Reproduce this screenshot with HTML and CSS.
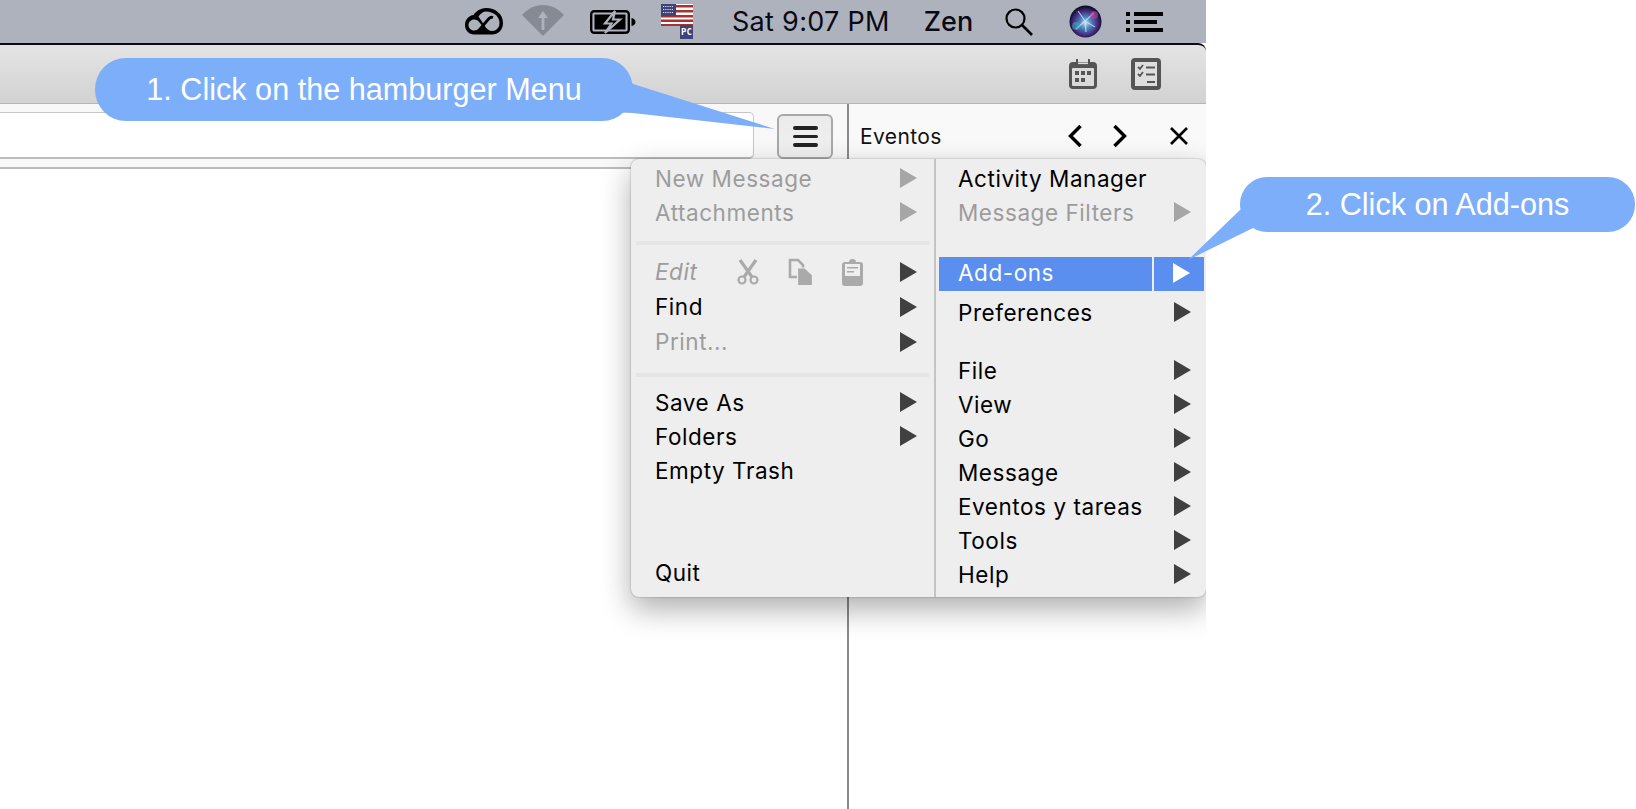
FILE: index.html
```html
<!DOCTYPE html>
<html lang="en">
<head>
<meta charset="utf-8">
<title>Add-ons</title>
<link rel="stylesheet" href="styles.css">
</head>
<body>

<div class="window">

  <div class="menubar">
    <svg class="ic-cc" width="38" height="27" viewBox="0 0 38 27"><path d="M9 26.500C4 26.500 0 22.500 0 17 0 11.500 4 7.500 8.500 7 11 3 16 0 21 0c9.500 0 17 6 17 15 0 7-5 11.500-11 11.500z" fill="#000"/><path d="M9 11.500c-3 0-5.500 2.500-5.500 5.500s2.500 5.500 5.500 5.500c2.500 0 4-1.200 5.500-3l2-2.500-2-2.500c-1.500-2-3-3-5.500-3z" fill="#adb2bd"/><path d="M13.500 8.500C15.500 5.500 18 3.500 21 3.500c7.500 0 13.500 5 13.500 11.500 0 4.500-3.500 8-7.500 8-2.500 0-4.500-1.500-6-3.300z" fill="#adb2bd"/><path d="M18 17.500l6-7c1-1 2.500-1.500 4-1" fill="none" stroke="#000" stroke-width="2.800"/></svg>
    <svg class="ic-wifi" width="42" height="31" viewBox="0 0 42 31"><path d="M0 10C6 3.500 13 0 21 0s15 3.500 21 10L21 31z" fill="#858a93"/><path d="M21 6l5 7h-3.600v12h-2.800V13H16z" fill="#adb2bd"/></svg>
    <svg class="ic-battery" width="47" height="24" viewBox="0 0 47 24"><rect x="1.200" y="1.200" width="37.600" height="21.600" rx="3" fill="#adb2bd" stroke="#000" stroke-width="2.400"/><path d="M4.500 4.500h31v15h-31z" fill="#000"/><path d="M25 1L15 13.500h6.500L15 23l15-13.500h-7z" fill="#000" stroke="#adb2bd" stroke-width="2.200"/><path d="M41.500 8c2.500 .5 4 2 4 4s-1.500 3.500-4 4z" fill="#000"/></svg>
    <div class="flag">
      <svg width="32" height="22" viewBox="0 0 32 22"><rect width="32" height="22" fill="#fff"/><path d="M0 1h32v2.400H0zM0 6h32v2.400H0zM0 11h32v2.400H0zM0 15.500h32v2.400H0zM0 20h32v2H0z" fill="#a8322f"/><rect width="15" height="12" fill="#3f4379"/><path d="M2 2.500h11M2 5.500h11M2 8.500h11" stroke="#dfe0ea" stroke-width="1.200" stroke-dasharray="1.200 1"/></svg>
      <span class="flag-pc">PC</span>
    </div>
    <span class="clock">Sat 9:07 PM</span>
    <span class="user">Zen</span>
    <svg class="ic-search" width="30" height="30" viewBox="0 0 30 30"><circle cx="11.500" cy="11.500" r="9" fill="none" stroke="#000" stroke-width="2.200"/><path d="M18 18l10 10" stroke="#000" stroke-width="2.600"/></svg>
    <svg class="ic-siri" width="33" height="33" viewBox="0 0 33 33"><defs><radialGradient id="siri" cx="50%" cy="55%" r="55%"><stop offset="0" stop-color="#c8d8f0"/><stop offset=".3" stop-color="#4a8fc0"/><stop offset=".65" stop-color="#4a3288"/><stop offset="1" stop-color="#05051a"/></radialGradient></defs><circle cx="16.500" cy="16.500" r="16" fill="url(#siri)"/><path d="M16 16L9 6M16 16l9-8M16 16l-9 8M16 16l10 6M16 16l1 11" stroke="#dfe8f8" stroke-width="1.300" opacity=".7"/><circle cx="7" cy="21" r="4" fill="#37c0c0" opacity=".5"/><circle cx="25" cy="10" r="4" fill="#c04a9e" opacity=".55"/></svg>
    <svg class="ic-list" width="37" height="20" viewBox="0 0 37 20"><path d="M0 0h4v4H0zM8 0h29v4H8zM0 8h4v4H0zM8 8h23v4H8zM0 16h4v4H0zM8 16h29v4H8z" fill="#000"/></svg>
  </div>

  <div class="toolbar">
    <svg width="28" height="30" viewBox="0 0 28 30"><path d="M4 3h3V0h2v3h10V0h2v3h3a4 4 0 0 1 4 4v19a4 4 0 0 1-4 4H4a4 4 0 0 1-4-4V7a4 4 0 0 1 4-4z" fill="#555"/><path d="M9 3.500h10v1.600H9z" fill="#ddd"/><rect x="3" y="9" width="22" height="18" rx="1" fill="#dadada"/><path d="M6 12h4v4H6zM12 12h4v4h-4zM18 12h4v4h-4zM6 19h4v4H6zM12 19h4v4h-4z" fill="#555"/></svg>
    <svg width="30" height="32" viewBox="0 0 30 32"><rect x="2" y="2" width="26" height="28" rx="2" fill="#dedede" stroke="#555" stroke-width="4"/><path d="M7 9l2 2 3-4M7 16l2 2 3-4" fill="none" stroke="#555" stroke-width="1.800"/><path d="M15 8.500h9v2h-9zM15 15.500h9v2h-9zM16 23h8v2h-8z" fill="#555"/></svg>
  </div>

  <div class="main">
    <div class="mail-pane">
      <div class="search-row">
        <div class="search-input"></div>
        <button class="burger"><span></span><span></span><span></span></button>
      </div>
    </div>
    <div class="side-pane">
      <div class="side-head">
        <span class="side-title">Eventos</span>
        <svg class="nav-prev" width="16" height="24" viewBox="0 0 16 24"><path d="M13.500 2L3.500 12l10 10" fill="none" stroke="#000" stroke-width="3.400"/></svg>
        <svg class="nav-next" width="16" height="24" viewBox="0 0 16 24"><path d="M2.500 2l10 10-10 10" fill="none" stroke="#000" stroke-width="3.400"/></svg>
        <svg class="nav-close" width="20" height="20" viewBox="0 0 20 20"><path d="M2 2l16 16M18 2L2 18" stroke="#000" stroke-width="2.600"/></svg>
      </div>
    </div>
  </div>

  <div class="appmenu">
    <div class="menu-col menu-left">
      <div class="item off"><span>New Message</span><i class="arr"></i></div>
      <div class="item off"><span>Attachments</span><i class="arr"></i></div>
      <div class="sep"></div>
      <div class="item tall off">
        <em>Edit</em>
        <div class="edit-tools">
          <svg width="24" height="26" viewBox="0 0 24 26"><path d="M4 1l12 17M20 1L8 18" stroke="#aaa" stroke-width="3.200"/><circle cx="6" cy="21" r="3.500" fill="none" stroke="#aaa" stroke-width="2.200"/><circle cx="18" cy="21" r="3.500" fill="none" stroke="#aaa" stroke-width="2.200"/></svg>
          <svg width="26" height="28" viewBox="0 0 26 28"><path d="M2 2h8l5 5v12H2z" fill="none" stroke="#aaa" stroke-width="2.600"/><path d="M9.500 10h7.500l7.500 7v10.500h-15z" fill="#aaa" stroke="#eee" stroke-width="1.200"/></svg>
          <svg width="21" height="28" viewBox="0 0 21 28"><path d="M3 4h4a3.500 3 0 0 1 7 0h4a3 3 0 0 1 3 3v18a3 3 0 0 1-3 3H3a3 3 0 0 1-3-3V7a3 3 0 0 1 3-3z" fill="#aaa"/><rect x="3" y="6" width="15" height="12" fill="#eee"/><path d="M5 9h11v1.500H5zM5 13h7v1.500H5z" fill="#aaa"/></svg>
        </div>
        <i class="arr dark"></i>
      </div>
      <div class="item tall"><span>Find</span><i class="arr dark"></i></div>
      <div class="item tall off"><span>Print...</span><i class="arr dark"></i></div>
      <div class="sep sep-2"></div>
      <div class="item"><span>Save As</span><i class="arr dark"></i></div>
      <div class="item"><span>Folders</span><i class="arr dark"></i></div>
      <div class="item"><span>Empty Trash</span></div>
      <div class="item item-quit"><span>Quit</span></div>
    </div>
    <div class="menu-col menu-right">
      <div class="item"><span>Activity Manager</span></div>
      <div class="item off"><span>Message Filters</span><i class="arr"></i></div>
      <div class="item picked"><span class="picked-label">Add-ons</span><span class="picked-arrow"><i class="arr white"></i></span></div>
      <div class="item item-prefs"><span>Preferences</span><i class="arr dark"></i></div>
      <div class="item item-file"><span>File</span><i class="arr dark"></i></div>
      <div class="item"><span>View</span><i class="arr dark"></i></div>
      <div class="item"><span>Go</span><i class="arr dark"></i></div>
      <div class="item"><span>Message</span><i class="arr dark"></i></div>
      <div class="item"><span>Eventos y tareas</span><i class="arr dark"></i></div>
      <div class="item"><span>Tools</span><i class="arr dark"></i></div>
      <div class="item"><span>Help</span><i class="arr dark"></i></div>
    </div>
  </div>
</div>

<div class="callout callout-one">
  <svg class="tail" width="175" height="60" viewBox="0 0 175 60"><path d="M0 8L25 4 170 50 10 32H0z" fill="#7daefa"/></svg>
  <span>1. Click on the hamburger Menu</span>
</div>

<div class="callout callout-two">
  <svg class="tail" width="75" height="60" viewBox="0 0 75 60"><path d="M55 3L3 53 68 21 72 3z" fill="#7daefa"/></svg>
  <span>2. Click on Add-ons</span>
</div>

</body>
</html>
```

FILE: styles.css
```css
html, body {
    margin: 0;
    padding: 0;
    height: 100%;
    overflow: hidden;
    background: #fff;
}
body {
    position: relative;
    font-family: Inter, "Noto Sans", sans-serif;
    color: #000;
}

.window {
    position: relative;
    width: 1206px;
    height: 809px;
    overflow: hidden;
    display: flex;
    flex-direction: column;
}

/* top bar */
.menubar {
    height: 43px;
    flex: none;
    background: #adb2bd;
    position: relative;
    display: flex;
    align-items: center;
    box-sizing: border-box;
    padding-left: 465px;
}
.ic-wifi { margin-left: 19px; margin-top: -2px; }
.ic-battery { margin-left: 26px; }
.flag { margin-left: 24px; position: relative; width: 32px; height: 35px; margin-top: -1px; }
.flag svg { display: block; }
.flag-pc {
    position: absolute;
    right: 0;
    bottom: 0;
    width: 13px;
    height: 14px;
    background: #3f4379;
    color: #fff;
    font: bold 9px/14px "DejaVu Sans Mono", monospace;
    text-align: center;
    letter-spacing: 0;
}
.clock { margin-left: 39px; font-size: 27px; font-weight: 400; letter-spacing: .3px; color: #0a0a14; white-space: nowrap; }
.user { margin-left: 34px; font-size: 27px; font-weight: 500; color: #0a0a14; }
.ic-search { margin-left: 31px; }
.ic-siri { margin-left: 35px; }
.ic-list { margin-left: 24px; }

.toolbar {
    height: 61px;
    flex: none;
    box-sizing: border-box;
    border-top: 2px solid #0c0d12;
    border-bottom: 1px solid #b5b5b5;
    border-top-right-radius: 8px;
    background: linear-gradient(#e4e4e4, #d2d2d2);
    display: flex;
    justify-content: flex-end;
    align-items: center;
    gap: 34px;
    padding: 0 45px 0 0;
}

.main {
    flex: 1;
    display: flex;
}
.mail-pane {
    flex: 1;
}
.search-row {
    height: 65px;
    box-sizing: border-box;
    border-bottom: 2px solid #bbb;
    background: #f8f8f8;
    display: flex;
    align-items: flex-start;
    padding-top: 8px;
}
.search-input {
    flex: 1;
    height: 47px;
    box-sizing: border-box;
    margin-left: -10px;
    background: #fff;
    border: 1px solid #c6c6c6;
    border-bottom: 2px solid #bdbdbd;
    border-radius: 0 5px 5px 0;
}
.burger {
    width: 56px;
    height: 45px;
    margin: 2px 14px 0 23px;
    padding: 0;
    box-sizing: border-box;
    background: linear-gradient(#ebebeb, #f0f0f0);
    border: 2px solid #a8a8a8;
    border-radius: 6px;
    display: flex;
    flex-direction: column;
    align-items: center;
    justify-content: center;
    gap: 5px;
}
.burger span {
    width: 25px;
    height: 3.500px;
    border-radius: 2px;
    background: #222;
}

.side-pane {
    width: 359px;
    flex: none;
    box-sizing: border-box;
    border-left: 2px solid #8a8a8a;
}
.side-head {
    height: 64px;
    background: #f9f9f9;
    display: flex;
    align-items: center;
    box-sizing: border-box;
    padding: 0 17px 0 11px;
}
.side-title { font-size: 21px; letter-spacing: .4px; flex: 1; color: #111; }
.nav-next { margin-left: 29px; }
.nav-close { margin-left: 41px; }

/* app menu */
.appmenu {
    position: absolute;
    left: 631px;
    top: 159px;
    width: 575px;
    height: 438px;
    display: flex;
    border-radius: 8px;
    background: #eee;
    box-shadow: 0 12px 30px rgba(0, 0, 0, .32), 0 0 2px rgba(0, 0, 0, .35);
    font-size: 22.500px;
    letter-spacing: .55px;
}
.menu-col {
    display: flex;
    flex-direction: column;
    box-sizing: border-box;
    padding-top: 2px;
}
.menu-left {
    width: 305px;
    border-right: 2px solid #c4c4c4;
    padding-left: 24px;
    padding-right: 17px;
    padding-bottom: 8px;
}
.menu-right {
    flex: 1;
    padding-left: 22px;
    padding-right: 15px;
}
.item {
    height: 34px;
    flex: none;
    display: flex;
    align-items: center;
    justify-content: space-between;
    white-space: nowrap;
}
.item.tall { height: 35px; }
.item.off { color: #9c9c9c; }
.item em { font-style: italic; width: 82px; }
.edit-tools {
    flex: 1;
    display: flex;
    align-items: center;
    gap: 28px;
    margin-left: -1px;
}
.edit-tools svg { display: block; }
.arr {
    display: block;
    width: 0;
    height: 0;
    border-style: solid;
    border-width: 10px 0 10px 17.500px;
    border-color: transparent transparent transparent #a6a6a6;
}
.arr.dark { border-left-color: #404040; }
.arr.white { border-left-color: #fff; }
.sep {
    height: 4px;
    flex: none;
    background: #e5e5e5;
    margin: 12px -12px 9px -19px;
}
.sep-2 { margin: 14px -12px 8px -19px; }
.item-quit { margin-top: auto; }

.picked {
    margin: 28px -13px 0 -19px;
    height: 34px;
    color: #fff;
    gap: 2px;
    justify-content: flex-start;
    align-items: stretch;
}
.picked-label {
    flex: 1;
    background: #5a8ff0;
    padding-left: 19px;
    line-height: 32px;
}
.picked-arrow {
    width: 50px;
    background: #5a8ff0;
    box-sizing: border-box;
    padding: 6px 0 0 19px;
}
.item-prefs { margin-top: 4px; }
.item-file { margin-top: 24px; }

/* blue notes */
.callout {
    position: absolute;
    background: #7daefa;
    color: #fff;
    font-family: "Liberation Sans", Arial, sans-serif;
    font-size: 30.600px;
    display: flex;
    align-items: center;
    justify-content: center;
    white-space: nowrap;
}
.callout span { position: relative; }
.callout-one {
    left: 95px;
    top: 58px;
    width: 538px;
    height: 63px;
    border-radius: 31px;
}
.callout-two {
    left: 1240px;
    top: 177px;
    width: 395px;
    height: 55px;
    border-radius: 27px;
}
.tail { position: absolute; }
.callout-one .tail { left: 510px; top: 21px; }
.callout-two .tail { left: -55px; top: 30px; }
```
